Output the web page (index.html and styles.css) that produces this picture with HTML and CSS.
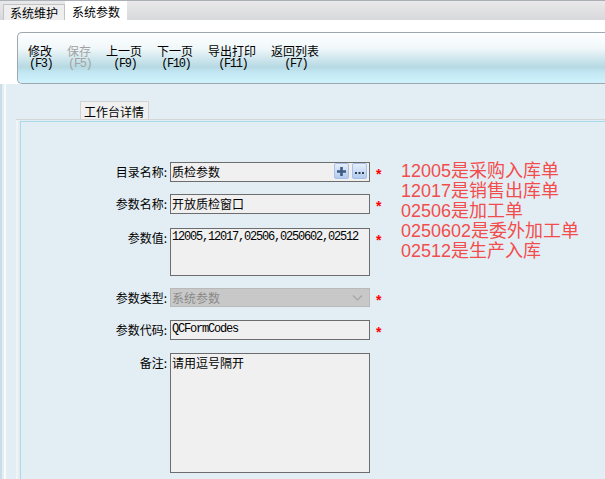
FILE: index.html
```html
<!DOCTYPE html>
<html lang="zh-CN">
<head>
  <meta charset="UTF-8">
  <meta name="viewport" content="width=device-width, initial-scale=1.0">
  <title>系统参数</title>
  <link rel="stylesheet" href="styles.css">
</head>
<body>
  <!-- 顶部页签 -->
  <div class="tab-bar">
    <div class="tab">系统维护</div>
    <div class="tab active">系统参数</div>
  </div>

  <div class="page">
    <!-- 工具栏 -->
    <div class="toolbar-area">
      <div class="toolbar">
        <div class="tool-btn"><span class="tool-name">修改</span><span class="tool-key">(F3)</span></div>
        <div class="tool-btn disabled"><span class="tool-name">保存</span><span class="tool-key">(F5)</span></div>
        <div class="tool-btn"><span class="tool-name">上一页</span><span class="tool-key">(F9)</span></div>
        <div class="tool-btn"><span class="tool-name">下一页</span><span class="tool-key">(F10)</span></div>
        <div class="tool-btn"><span class="tool-name">导出打印</span><span class="tool-key">(F11)</span></div>
        <div class="tool-btn"><span class="tool-name">返回列表</span><span class="tool-key">(F7)</span></div>
      </div>
    </div>

    <!-- 详情 -->
    <div class="detail">
      <div class="detail-tabs">
        <div class="detail-tab">工作台详情</div>
      </div>
      <div class="panel-frame">
        <div class="panel">
          <div class="form">
            <div class="form-label">目录名称:</div>
            <div class="field">
              <span class="field-text">质检参数</span>
              <span class="field-btns">
                <span class="mini-btn">
                  <svg width="11" height="11" viewBox="0 0 11 11"><path d="M5.5 1v9M1 5.5h9" stroke="#3e5c82" stroke-width="2.6"/></svg>
                </span>
                <span class="mini-btn">
                  <svg width="11" height="11" viewBox="0 0 11 11"><path d="M1 7h2M4.5 7h2M8 7h2" stroke="#33404f" stroke-width="2"/></svg>
                </span>
              </span>
            </div>
            <div class="required">*</div>

            <div class="form-label">参数名称:</div>
            <div class="field"><span class="field-text">开放质检窗口</span></div>
            <div class="required">*</div>

            <div class="form-label shift">参数值:</div>
            <div class="field tall mono shift">12005,12017,02506,0250602,02512</div>
            <div class="required shift">*</div>

            <div class="form-label">参数类型:</div>
            <div class="field select">
              <span class="field-text">系统参数</span>
              <svg class="chevron" width="11" height="6" viewBox="0 0 11 6"><path d="M1 0.5l4.5 4.5 4.5-4.5" fill="none" stroke="#a6a6a6" stroke-width="1.2"/></svg>
            </div>
            <div class="required">*</div>

            <div class="form-label">参数代码:</div>
            <div class="field mono"><span class="field-text">QCFormCodes</span></div>
            <div class="required">*</div>

            <div class="form-label nudge">备注:</div>
            <div class="field remark-box nudge">请用逗号隔开</div>
            <div></div>
          </div>

          <div class="notes">
            <div>12005是采购入库单</div>
            <div>12017是销售出库单</div>
            <div>02506是加工单</div>
            <div>0250602是委外加工单</div>
            <div>02512是生产入库</div>
          </div>
        </div>
      </div>
    </div>
  </div>
</body>
</html>
```

FILE: styles.css
```css
html, body {
  margin: 0;
  padding: 0;
  height: 100%;
  overflow: hidden;
}

body {
  font-family: "Noto Sans CJK SC", sans-serif;
  font-size: 12px;
  color: #000;
  background: #e3eef4;
  display: flex;
  flex-direction: column;
}

/* Top tabs */
.tab-bar {
  height: 20px;
  box-sizing: border-box;
  border-top: 1px solid #aab0b5;
  background: linear-gradient(#e9e9eb, #d8d9dc);
  display: flex;
  align-items: flex-end;
  padding-left: 3px;
}

.tab {
  height: 15px;
  line-height: 15px;
  padding: 0 6px 0 6px;
  border: 1px solid #c3c3c3;
  border-bottom: none;
  background: #eeeeee;
}

.tab.active {
  height: 19px;
  line-height: 21px;
  border: none;
  padding: 0 7px;
  background: #fff;
}

.page {
  flex: 1;
  display: flex;
  flex-direction: column;
  background: linear-gradient(to right, #cbdde9 0 2px, #e3eef4 2px 4px, #f8fbfc 4px 6px, #e3eef4 6px);
}

/* Toolbar */
.toolbar-area {
  background: #fff;
  padding: 12px 0 0 17px;
}

.toolbar {
  height: 52px;
  box-sizing: border-box;
  border: 1px solid #9ea8b0;
  border-right: none;
  border-radius: 5px 0 0 5px;
  background: linear-gradient(#fdfeff 0%, #f1f8fa 30%, #b6d9e3 68%, #c4e9f4 80%, #cff1fb 100%);
  display: flex;
  gap: 15px;
  padding: 11px 0 0 10px;
}

.tool-btn {
  display: flex;
  flex-direction: column;
  align-items: center;
}

.tool-name {
  line-height: 13px;
}

.tool-key {
  font-family: "Liberation Mono", monospace;
  font-size: 12px;
  line-height: 12px;
  margin-top: 1px;
  letter-spacing: -1.4px;
  margin-right: -1.4px;
}

.tool-btn.disabled {
  color: #a3a3a3;
}

/* Detail panel */
.detail {
  flex: 1;
  display: flex;
  flex-direction: column;
  margin: 17px 0 0 16px;
}

.detail-tabs {
  display: flex;
  padding-left: 64px;
  border-bottom: 1px solid #d5d5d5;
}

.detail-tab {
  height: 17px;
  line-height: 19px;
  padding: 0 4px 0 3px;
  border: 1px solid #d2d2d2;
  border-bottom: none;
  background: #f0f0f0;
}

.panel-frame {
  flex: 1;
  display: flex;
  border-left: 2px solid #f1f3f4;
  padding-top: 1px;
}

.panel {
  flex: 1;
  display: flex;
  align-items: flex-start;
  margin-left: 2px;
  border-top: 1px solid #a8d9eb;
  border-left: 1px solid #a8d9eb;
  padding-top: 40px;
}

.form {
  display: grid;
  grid-template-columns: 146px 200px 16px;
  column-gap: 3px;
  row-gap: 12px;
  align-items: start;
}

/* the multi-line rows sit a little lower */
.form .shift {
  margin-top: 2px;
}

.form .nudge {
  margin-top: 1px;
}

.form-label {
  text-align: right;
  line-height: 20px;
}

.field {
  box-sizing: border-box;
  height: 20px;
  border: 1px solid #6d6d6d;
  background: #f0f0f0;
  padding: 0 1px;
  line-height: 17px;
  display: flex;
  align-items: flex-start;
}

.field-text {
  flex: 1;
}

.field.tall {
  height: 48px;
}

.field.remark-box {
  height: 120px;
}

.field.mono {
  font-family: "Liberation Mono", monospace;
  letter-spacing: -1.2px;
}

.field.select {
  height: 19px;
  background: #c8c8c8;
  border-color: #b9b9b9;
  color: #8a8a8a;
  align-items: center;
  line-height: 17px;
}

.chevron {
  margin-right: 5px;
}

.field-btns {
  display: flex;
  gap: 3px;
  margin: 0 1px 0 0;
}

.mini-btn {
  width: 15px;
  height: 16px;
  box-sizing: border-box;
  border: 1px solid #a9c0e2;
  border-radius: 2px;
  background: linear-gradient(#e6effc, #b2cbef);
  display: flex;
  align-items: center;
  justify-content: center;
}

.required {
  color: #ff0000;
  font-family: "Liberation Sans", sans-serif;
  font-weight: bold;
  font-size: 14px;
  line-height: 20px;
  padding: 2px 0 0 3px;
  height: 18px;
}

/* Red notes on the right */
.notes {
  margin: -1px 0 0 12px;
  font-family: "Liberation Sans", "Noto Sans CJK SC", sans-serif;
  font-size: 18px;
  line-height: 20px;
  color: #f24d4d;
}
```
